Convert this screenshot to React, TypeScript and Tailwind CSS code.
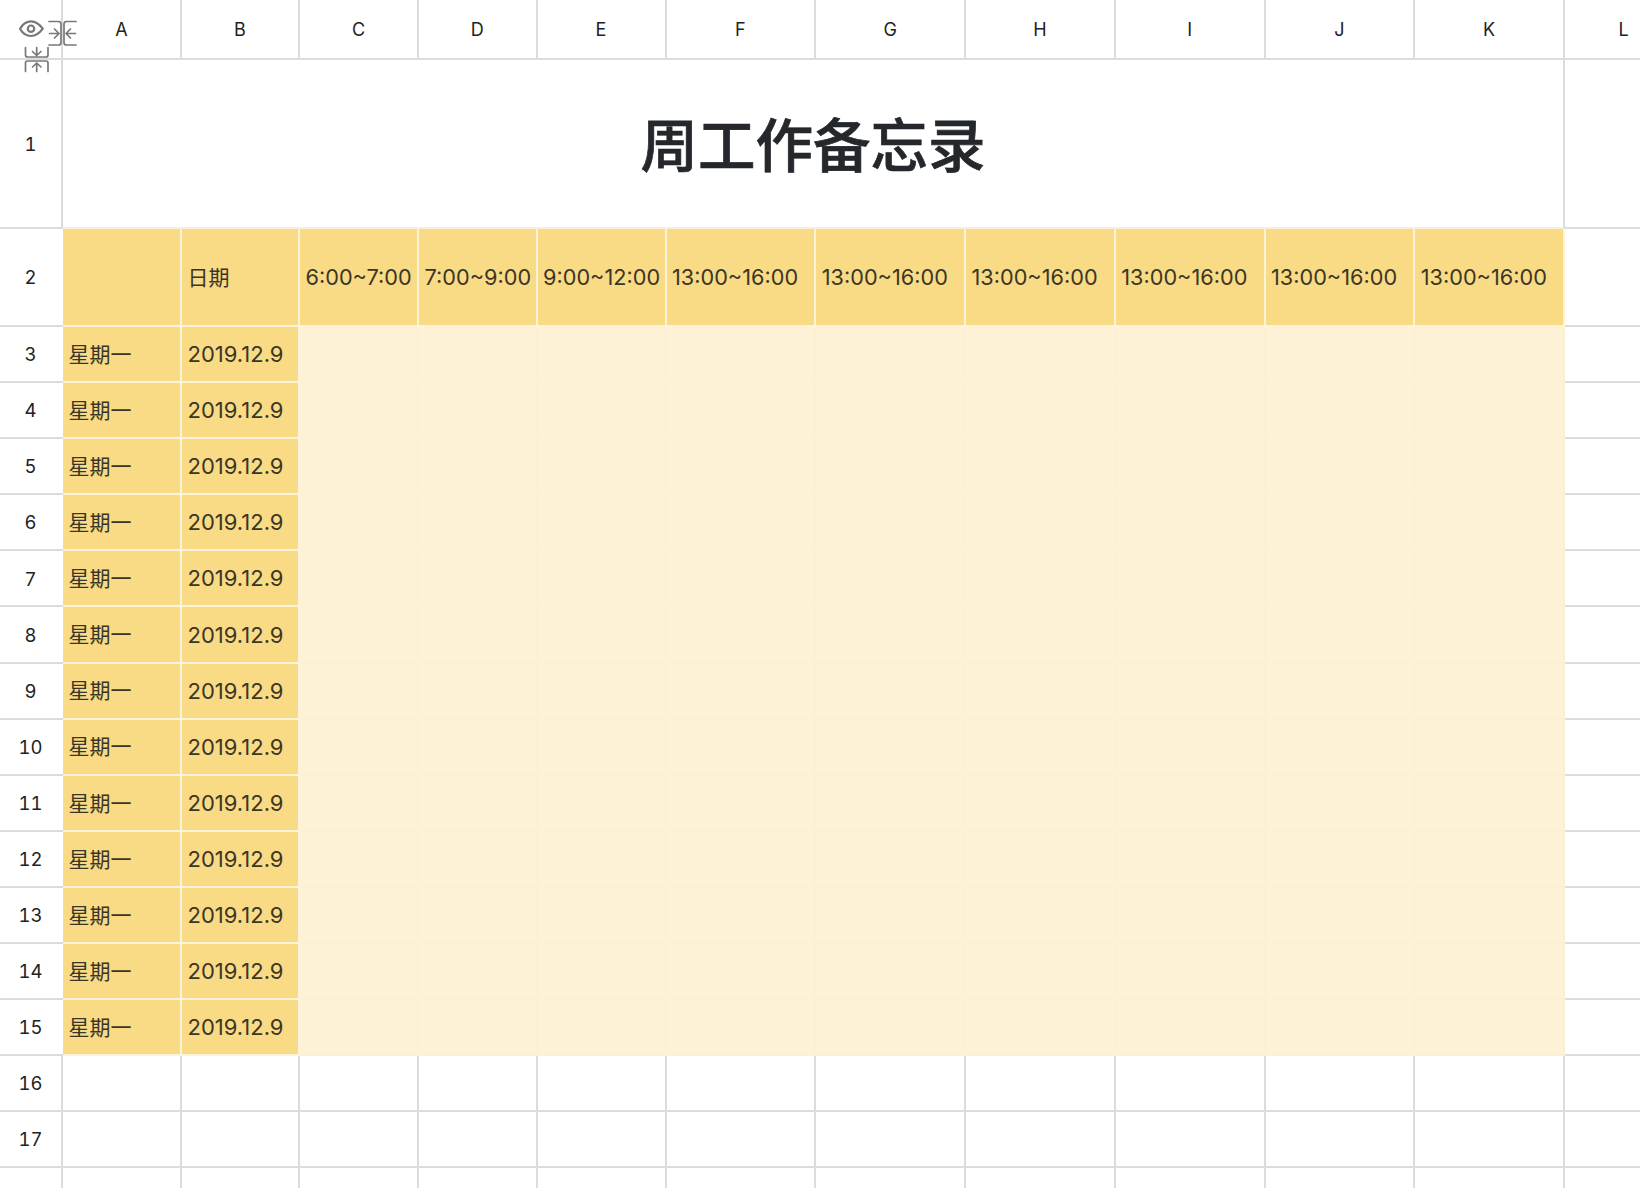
const FONT = "font-['Inter','Noto_Sans_CJK_SC',sans-serif]";

const COLUMNS = ["A", "B", "C", "D", "E", "F", "G", "H", "I", "J", "K", "L"];
const TIME_SLOTS = [
  "6:00~7:00",
  "7:00~9:00",
  "9:00~12:00",
  "13:00~16:00",
  "13:00~16:00",
  "13:00~16:00",
  "13:00~16:00",
  "13:00~16:00",
  "13:00~16:00",
];
const DATA_ROWS = [3, 4, 5, 6, 7, 8, 9, 10, 11, 12, 13, 14, 15];
const EMPTY_ROWS = [16, 17];

const GREY_LINE = "border-[#dcdcdc]";
const YELLOW_CELL =
  "bg-[#f9da85] border-r-2 border-b-2 border-[#fdf3d8] flex items-center pl-[5.5px] pt-[1px] text-[#3a3626] whitespace-nowrap";
const LIGHT_CELL = "bg-[#fdf2d6] border-r-2 border-b-2 border-[#fcf0d3]";

function CornerIcons() {
  return (
    <svg
      className="absolute left-0 top-0 pointer-events-none"
      width="80"
      height="76"
      viewBox="0 0 80 76"
      fill="none"
      stroke="#787878"
      strokeWidth="1.7"
      strokeLinecap="round"
      strokeLinejoin="round"
    >
      {/* eye */}
      <path
        strokeWidth="2.2"
        d="M20 28.7C22.8 23.8 26.6 21.3 31 21.3C35.4 21.3 39.2 23.8 42.8 28.7C39.2 33.6 35.4 36 31 36C26.6 36 22.8 33.6 20 28.7Z"
      />
      <circle cx="31" cy="28.7" r="3.2" strokeWidth="2.2" />
      {/* collapse columns */}
      <path d="M49 21.5H58.5C60 21.5 61 22.5 61 24V42.5C61 44 60 45 58.5 45H49" />
      <path d="M76 21.5H66.5C65 21.5 64 22.5 64 24V42.5C64 44 65 45 66.5 45H76" />
      <path d="M49.5 33.5H59M54.5 29L59 33.5L54.5 38" />
      <path d="M75.5 33.5H66M70.5 29L66 33.5L70.5 38" />
      {/* collapse rows */}
      <path d="M25.5 47.5V55C25.5 56.2 26.3 57 27.5 57H46C47.2 57 48 56.2 48 55V47.5" />
      <path d="M25.5 71.5V63C25.5 61.8 26.3 61 27.5 61H46C47.2 61 48 61.8 48 63V71.5" />
      <path d="M36.7 47.5V55.5M32.5 51.5L36.7 55.5L41 51.5" />
      <path d="M36.7 71.5V63M32.5 67L36.7 63L41 67" />
    </svg>
  );
}

function RowLabel({ n, line }: { n?: number; line?: boolean }) {
  return (
    <div
      className={`flex items-center justify-center border-b-2 ${GREY_LINE} pt-[2px] text-[18.5px] tabular-nums text-[#222222] ${line ? "border-r-2" : "pr-[2px]"}`}
    >
      {n}
    </div>
  );
}

export default function App() {
  return (
    <div className={`relative h-[1188px] w-[1640px] overflow-hidden bg-white ${FONT}`}>
      <div className="grid grid-cols-[63px_119px_118px_119px_118.5px_129px_149.75px_149.75px_149.75px_149.75px_149.75px_149.75px_117px] grid-rows-[60px_169px_98px_repeat(16,56.1px)]">
        {/* Column header */}
        <div className={`border-r-2 border-b-2 ${GREY_LINE}`} />
        {COLUMNS.map((c) => (
          <div
            key={c}
            className={`flex items-center justify-center border-b-2 ${GREY_LINE} text-[18px] text-[#222222] ${c === "L" ? "" : "border-r-2"}`}
          >
            {c}
          </div>
        ))}

        {/* Title */}
        <RowLabel n={1} line />
        <div
          className={`col-span-11 flex items-center justify-center border-r-2 border-b-2 ${GREY_LINE} border-b-[#f8efda] pt-[5px] text-[57.5px] font-medium text-[#24272b] [-webkit-text-stroke:0.7px_#24272b]`}
        >
          周工作备忘录
        </div>
        <div className={`border-b-2 ${GREY_LINE}`} />

        {/* Time slots */}
        <RowLabel n={2} />
        <div className={YELLOW_CELL} />
        <div className={`${YELLOW_CELL} text-[21px]`}>日期</div>
        {TIME_SLOTS.map((slot, i) => (
          <div key={`${slot}-${i}`} className={`${YELLOW_CELL} text-[21.7px]`}>
            {slot}
          </div>
        ))}
        <div className={`border-b-2 ${GREY_LINE}`} />

        {/* Rows */}
        {DATA_ROWS.map((n) => (
          <div key={n} className="contents">
            <RowLabel n={n} />
            <div className={`${YELLOW_CELL} text-[21px]`}>星期一</div>
            <div className={`${YELLOW_CELL} text-[22px]`}>2019.12.9</div>
            {TIME_SLOTS.map((_, i) => (
              <div key={i} className={LIGHT_CELL} />
            ))}
            <div className={`border-b-2 ${GREY_LINE}`} />
          </div>
        ))}

        {/* Empty rows */}
        {EMPTY_ROWS.map((n) => (
          <div key={n} className="contents">
            <RowLabel n={n} line />
            {COLUMNS.map((c) => (
              <div
                key={c}
                className={`border-b-2 ${GREY_LINE} ${c === "L" ? "" : "border-r-2"}`}
              />
            ))}
          </div>
        ))}
        <RowLabel line />
        {COLUMNS.map((c) => (
          <div
            key={c}
            className={`${GREY_LINE} ${c === "L" ? "" : "border-r-2"}`}
          />
        ))}
      </div>
      <CornerIcons />
    </div>
  );
}
